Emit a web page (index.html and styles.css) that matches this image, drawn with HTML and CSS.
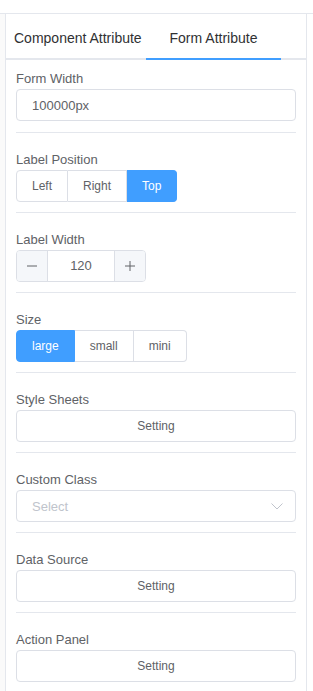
FILE: index.html
```html
<!DOCTYPE html>
<html lang="en">
<head>
    <meta charset="UTF-8">
    <meta name="viewport" content="width=device-width, initial-scale=1.0">
    <title>Form Attribute</title>
    <link rel="stylesheet" href="styles.css">
</head>
<body>
<div class="layout">
	<div class="side-strip"></div>
	<aside class="config-box">
		<div class="tabs-header">
			<div class="tab-item tab-first">Component Attribute</div>
			<div class="tab-item tab-second is-active">Form Attribute</div>
		</div>
		<div class="form-box">
			<div class="form-item first-item">
				<div class="item-label">Form Width</div>
				<div class="input-box">
					<span class="input-text">100000px</span>
				</div>
			</div>
			<div class="form-item">
				<div class="item-label">Label Position</div>
				<div class="btn-group">
					<span class="radio-btn">Left</span>
					<span class="radio-btn">Right</span>
					<span class="radio-btn is-checked">Top</span>
				</div>
			</div>
			<div class="form-item">
				<div class="item-label">Label Width</div>
				<div class="input-number">
					<span class="num-btn num-minus">
						<svg width="10" height="10" viewBox="0 0 10 10"><line x1="0" y1="5" x2="10" y2="5" stroke="#606266" stroke-width="1"/></svg>
					</span>
					<span class="num-value">120</span>
					<span class="num-btn num-plus">
						<svg width="10" height="10" viewBox="0 0 10 10"><line x1="0" y1="5" x2="10" y2="5" stroke="#606266" stroke-width="1"/><line x1="5" y1="0" x2="5" y2="10" stroke="#606266" stroke-width="1"/></svg>
					</span>
				</div>
			</div>
			<div class="form-item">
				<div class="item-label">Size</div>
				<div class="btn-group">
					<span class="radio-btn is-checked">large</span>
					<span class="radio-btn">small</span>
					<span class="radio-btn">mini</span>
				</div>
			</div>
			<div class="form-item">
				<div class="item-label">Style Sheets</div>
				<button class="setting-btn">Setting</button>
			</div>
			<div class="form-item">
				<div class="item-label">Custom Class</div>
				<div class="input-box select-box">
					<span class="input-text placeholder">Select</span>
					<svg class="select-arrow" width="12" height="7" viewBox="0 0 12 7"><polyline points="0.5,0.5 6,6 11.5,0.5" fill="none" stroke="#c0c4cc" stroke-width="1"/></svg>
				</div>
			</div>
			<div class="form-item">
				<div class="item-label">Data Source</div>
				<button class="setting-btn">Setting</button>
			</div>
			<div class="form-item last-item">
				<div class="item-label">Action Panel</div>
				<button class="setting-btn">Setting</button>
			</div>
		</div>
	</aside>
</div>
</body>
</html>
```

FILE: styles.css
```css
*{
	padding:0;margin:0;box-sizing:border-box;
}
html,body{height:100%;}
body{font-family:"Liberation Sans",Arial,sans-serif;font-size:13px;color:#606266;background:#fff;padding-top:13px;}

.layout{
	display:flex;
	min-height:100%;
	border-top:1px solid #e4e7ed;
}
.side-strip{width:5px;background:#fafafa;}
.config-box{
	width:302px;
	border-left:1px solid #e4e7ed;
	border-right:1px solid #e4e7ed;
}

/* tabs */
.tabs-header{
	display:flex;
	padding:4px 0 0 8px;
	border-bottom:2px solid #e4e7ed;
}
.tab-item{
	height:42px;
	line-height:40px;
	font-size:14px;
	color:#303133;
	margin-bottom:-2px;
	border-bottom:2px solid transparent;
	white-space:nowrap;
}
.tab-first{width:132px;}
.tab-second{width:135px;text-align:center;}
.tab-item.is-active{border-bottom-color:#409eff;}

/* form */
.form-box{padding:0 10px;}
.form-item{
	padding:15px 0 10px;
	border-bottom:1px solid #e4e7ed;
}
.form-item.first-item{padding-top:7px;padding-bottom:11px;}
.form-item.last-item{border-bottom:0;}
.item-label{
	font-size:13px;
	line-height:20px;
	padding-top:2px;
	color:#606266;
}

.input-box{
	height:32px;
	border:1px solid #dcdfe6;
	border-radius:4px;
	padding:0 15px;
	display:flex;
	align-items:center;
	justify-content:space-between;
}
.input-text{font-size:13px;color:#606266;}
.input-text.placeholder{color:#c0c4cc;}
.select-box{padding-right:12px;}

.btn-group{display:flex;}
.radio-btn{
	height:32px;
	line-height:30px;
	padding:0 15px;
	font-size:12px;
	color:#606266;
	border:1px solid #dcdfe6;
	border-left:0;
	background:#fff;
}
.radio-btn:first-child{border-left:1px solid #dcdfe6;border-radius:4px 0 0 4px;}
.radio-btn:last-child{border-radius:0 4px 4px 0;}
.radio-btn.is-checked{
	background:#409eff;
	border-color:#409eff;
	color:#fff;
}

.input-number{
	display:flex;
	width:130px;
	height:32px;
	border:1px solid #dcdfe6;
	border-radius:4px;
	overflow:hidden;
}
.num-btn{
	width:31px;
	background:#f5f7fa;
	display:flex;
	align-items:center;
	justify-content:center;
}
.num-minus{border-right:1px solid #dcdfe6;}
.num-plus{border-left:1px solid #dcdfe6;}
.num-value{
	flex:1;
	text-align:center;
	line-height:30px;
	font-size:13px;
	color:#606266;
}

.setting-btn{
	display:block;
	width:100%;
	height:32px;
	border:1px solid #dcdfe6;
	border-radius:4px;
	background:#fff;
	font-family:"Liberation Sans",Arial,sans-serif;
	font-size:12px;
	color:#606266;
}
```
